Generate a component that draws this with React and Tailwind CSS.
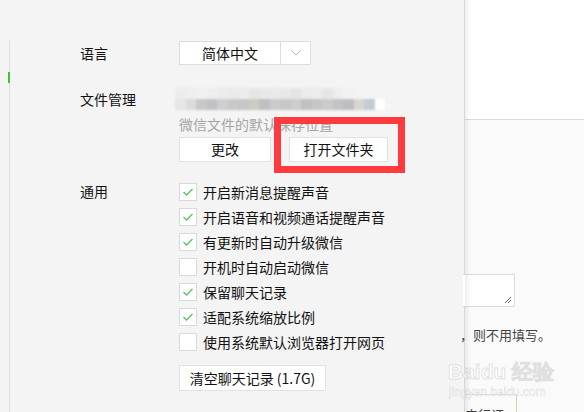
import React from "react";

const font = { fontFamily: '"Microsoft YaHei", "Noto Sans CJK SC", "Noto Sans", sans-serif' };

function Check({ checked, label }) {
  return (
    <div className="flex items-center h-[25px]">
      <div className="w-[18px] h-[18px] bg-white border border-[#d9d9d9] flex items-center justify-center">
        {checked && (
          <svg width="12" height="10" viewBox="0 0 12 10">
            <path d="M1.5 5 L4.5 8 L10.5 2" fill="none" stroke="#5fbf5f" strokeWidth="1.3" />
          </svg>
        )}
      </div>
      <span className="ml-[6px] text-[14px] text-[#111] leading-none">{label}</span>
    </div>
  );
}

const mosaicTop = ["#ececec", "#eeeeee", "#f0f0ee", "#eceff1", "#ececec", "#eaeaea", "#ececec", "#e6e6e6", "#e8e8e8", "#eaeaea", "#e8e8e8", "#e4e4e4", "#ebebeb", "#ececec", "#e6e6e6", "#eeeeee", "#f2f2f2", "#f4f4f4", "#f4f4f4", "#f4f4f4"];
const mosaicBot = ["#e6e6e6", "#dcdcdc", "#c8c8c8", "#c0c1c4", "#cfcfcf", "#c9c9c9", "#c6c6c6", "#cdcbc6", "#bfc0c2", "#cacbcc", "#c8c8c8", "#cdcdcd", "#c0c0c2", "#c6c6c8", "#cacbcc", "#c3c3c6", "#bfbdc2", "#d9d6d2", "#c6cbd0", "#ffffff"];

export default function App() {
  return (
    <div className="w-[584px] h-[412px] flex overflow-hidden" style={font}>
      {/* Left settings panel */}
      <div className="relative w-[465px] h-full bg-[#f4f4f4] border-r border-[#d6d6d6] flex">
        <div className="w-[9px]" />
        <div className="relative mt-[41px] border-l border-[#dedede] flex-1">
          <div className="absolute left-[-2px] top-[31px] w-[2px] h-[11px] bg-[#3cc23c]" />
          <div className="pl-[70px] grid grid-cols-[99px_1fr]">
            {/* Language */}
            <div className="h-[24px] flex items-center text-[14px] text-[#111]">语言</div>
            <div className="flex">
              <div className="w-[132px] h-[24px] bg-white border border-[#dcdcdc] flex">
                <div className="w-[100px] flex items-center justify-center text-[14px] text-[#111]">简体中文</div>
                <div className="flex-1 border-l border-[#dcdcdc] flex items-center justify-center">
                  <svg width="10" height="6" viewBox="0 0 10 6">
                    <path d="M0.5 0.5 L5 5 L9.5 0.5" fill="none" stroke="#bdbdbd" strokeWidth="1" />
                  </svg>
                </div>
              </div>
            </div>

            {/* File management */}
            <div className="mt-[23px] h-[22px] flex items-center text-[14px] text-[#111]">文件管理</div>
            <div className="mt-[23px]">
              <div className="ml-[-4px] w-[210px] h-[22px] flex flex-col blur-[1px]">
                <div className="flex h-[11px]">
                  {mosaicTop.map((c, i) => (
                    <div key={i} className="flex-1" style={{ background: c }} />
                  ))}
                </div>
                <div className="flex h-[11px]">
                  {mosaicBot.map((c, i) => (
                    <div key={i} className="flex-1" style={{ background: c }} />
                  ))}
                </div>
              </div>
              <div className="mt-[5px] h-[18px] flex items-center text-[14px] text-[#a5a5a5]">微信文件的默认保存位置</div>
              <div className="mt-[4px] flex gap-[18px]">
                <div className="w-[92px] h-[25px] bg-white border border-[#e2e2e2] flex items-center justify-center text-[14px] text-[#111]">更改</div>
                <div className="w-[99px] h-[25px] bg-white border border-[#e2e2e2] flex items-center justify-center text-[14px] text-[#111]">打开文件夹</div>
              </div>
            </div>

            {/* General */}
            <div className="mt-[17px] h-[25px] flex items-center text-[14px] text-[#111]">通用</div>
            <div className="mt-[17px] flex flex-col">
              <Check checked label="开启新消息提醒声音" />
              <Check checked label="开启语音和视频通话提醒声音" />
              <Check checked label="有更新时自动升级微信" />
              <Check label="开机时自动启动微信" />
              <Check checked label="保留聊天记录" />
              <Check checked label="适配系统缩放比例" />
              <Check label="使用系统默认浏览器打开网页" />
              <div className="mt-[11px] w-[147px] h-[26px] bg-white border border-[#e2e2e2] flex items-center justify-center text-[14px] text-[#111]">清空聊天记录 (1.7G)</div>
            </div>
          </div>
        </div>

        {/* red annotation box */}
        <div className="absolute left-[274px] top-[117px] w-[131px] h-[56px] border-[7px] border-[#fd3b3e]" />
      </div>

      {/* Right background window */}
      <div className="relative flex-1 h-full flex flex-col">
        <div className="h-[120px] bg-white border-b border-[#dadada]" />
        <div className="flex-1 bg-[#fafafa] relative">
          <div className="absolute left-[-2px] top-[154px] w-[52px] h-[33px] bg-white border border-[#dadada] border-l-0">
            <svg className="absolute right-[2px] bottom-[2px]" width="8" height="8" viewBox="0 0 8 8">
              <path d="M1 7 L7 1 M4 7 L7 4" stroke="#666" strokeWidth="1" />
            </svg>
          </div>
          <div className="absolute left-[-5px] top-[205px] text-[13px] text-[#444] whitespace-nowrap">，则不用填写。</div>
          <div className="absolute left-[0px] top-[274px] w-[52px] h-[30px] border border-[#c0e0b8] border-l-0 bg-[#fafafa] overflow-hidden">
            <div className="mt-[10px] ml-[0px] text-[13px] text-[#444] whitespace-nowrap">申行证</div>
          </div>
          <div className="absolute left-[-17px] top-[241px] text-[21px] font-bold text-white whitespace-nowrap leading-none opacity-90" style={{ WebkitTextStroke: "1px #dedede", fontFamily: "Arial, sans-serif" }}>Baidu 经验</div>
          <div className="absolute left-[-16px] top-[266px] text-[12px] text-white whitespace-nowrap leading-none opacity-90" style={{ WebkitTextStroke: "0.6px #dedede", fontFamily: "Arial, sans-serif" }}>jingyan.baidu.com</div>
        </div>
        <div className="absolute left-0 top-0 w-[6px] h-full bg-gradient-to-r from-[#00000010] to-transparent" />
      </div>
    </div>
  );
}
